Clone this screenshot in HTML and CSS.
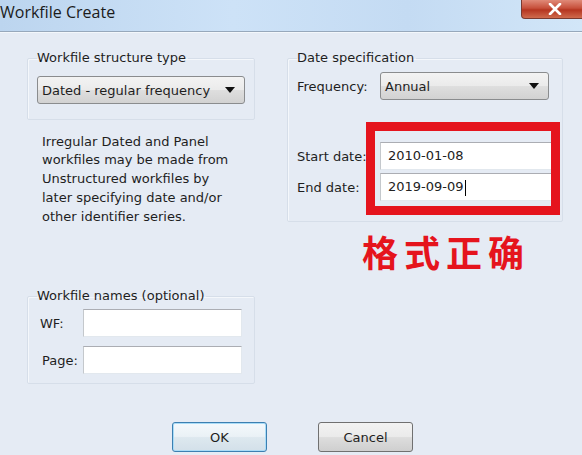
FILE: index.html
```html
<!doctype html>
<html>

	<head>
		<title>Workfile Create</title>
		<meta charset="utf-8" />
		<link rel="stylesheet" href="styles.css">
	</head>

	<body>

		<div class="titlebar">
			<span class="title">Workfile Create</span>
			<div class="close">
				<svg width="16" height="12" viewBox="0 0 16 12">
					<path d="M3 1 L13 11 M13 1 L3 11" stroke="#fff" stroke-width="2.6" stroke-linecap="round" />
				</svg>
			</div>
		</div>

		<div class="content">
			<div class="col left">
				<fieldset class="group g-structure">
					<legend>Workfile structure type</legend>
					<div class="combo">
						<span>Dated - regular frequency</span>
						<i class="arrow"></i>
					</div>
				</fieldset>

				<p class="note">
					Irregular Dated and Panel<br>
					workfiles may be made from<br>
					Unstructured workfiles by<br>
					later specifying date and/or<br>
					other identifier series.
				</p>

				<fieldset class="group g-names">
					<legend>Workfile names (optional)</legend>
					<div class="row">
						<label class="lbl-wf">WF:</label>
						<div class="field"></div>
					</div>
					<div class="row">
						<label class="lbl-page">Page:</label>
						<div class="field"></div>
					</div>
				</fieldset>
			</div>

			<div class="col right">
				<fieldset class="group g-date">
					<legend>Date specification</legend>
					<div class="row">
						<label>Frequency:</label>
						<div class="combo">
							<span>Annual</span>
							<i class="arrow"></i>
						</div>
					</div>
					<div class="dates">
						<div class="row">
							<label>Start date:</label>
							<div class="field">2010-01-08</div>
						</div>
						<div class="row">
							<label>End date:</label>
							<div class="field">2019-09-09<span class="caret"></span></div>
						</div>
						<!-- 红框标注 -->
						<div class="mark"></div>
					</div>
				</fieldset>

				<div class="note-cn">格式正确</div>
			</div>
		</div>

		<div class="buttons">
			<button class="btn default">OK</button>
			<button class="btn">Cancel</button>
		</div>

	</body>

</html>
```

FILE: styles.css
```css
body {
	margin: 0;
	width: 582px;
	height: 455px;
	overflow: hidden;
	background: #e5ebf4;
	font-family: "DejaVu Sans", sans-serif;
	font-size: 13px;
	color: #1e1e1e;
}

.titlebar {
	position: relative;
	height: 31px;
	border-bottom: 1px solid #97a8bb;
	background: linear-gradient(90deg, #bcd5ef 0%, #cde2f7 40%, #c4dbf3 70%, #d2e6f8 100%);
	box-shadow: 0 1px 0 #f3f7fb;
}

.title {
	display: block;
	font: 16px/24px "Open Sans", sans-serif;
	color: #1b1b1b;
}

.close {
	position: absolute;
	right: -6px;
	top: 0;
	width: 65px;
	height: 18px;
	border: 1px solid #7a3a30;
	border-top: none;
	border-radius: 0 0 4px 4px;
	background: linear-gradient(#e08a78, #c7503b 45%, #b53520 55%, #cf6a4d);
	display: flex;
	align-items: center;
	justify-content: center;
}

.content {
	display: grid;
	grid-template-columns: 228px 276px;
	column-gap: 32px;
	padding-left: 27px;
}

.group {
	margin: 0;
	padding: 0 13px 0 9px;
	border: 1px solid #d6dee9;
	border-radius: 2px;
	box-shadow: inset 1px 1px 0 #f4f7fb;
}

.group legend {
	padding: 0 2px 0 0;
	line-height: 16px;
}

.g-structure {
	margin-top: 18px;
	padding-top: 10px;
	padding-right: 9px;
	padding-bottom: 15px;
}

.g-names {
	margin-top: 62px;
	padding-top: 5px;
	padding-right: 12px;
	padding-bottom: 9px;
}

.g-date {
	margin-top: 18px;
	padding-top: 6px;
	padding-bottom: 20px;
}

.row {
	display: flex;
	align-items: center;
}

.g-names .row + .row {
	margin-top: 9px;
}

.g-names label {
	width: 46px;
	flex: none;
	box-sizing: border-box;
}

.lbl-wf {
	padding-left: 3px;
}

.lbl-page {
	padding-left: 5px;
}

.g-date label {
	width: 83px;
	flex: none;
	white-space: nowrap;
}

.combo {
	flex: 1;
	height: 28px;
	box-sizing: border-box;
	border: 1px solid #8a8c8e;
	border-radius: 3px;
	background: linear-gradient(#f3f3f3, #ebebeb 48%, #dedede 52%, #d2d2d2);
	display: flex;
	align-items: center;
	padding: 0 9px 0 4px;
}

.combo span {
	flex: 1;
}

.arrow {
	width: 0;
	height: 0;
	border-left: 5px solid transparent;
	border-right: 5px solid transparent;
	border-top: 6px solid #111;
}

.field {
	flex: 1;
	height: 28px;
	box-sizing: border-box;
	background: #fff;
	border: 1px solid #e2e8ee;
	border-top-color: #abadb3;
	border-left-color: #c4c8cc;
	padding-left: 7px;
	line-height: 26px;
	color: #222;
	position: relative;
	z-index: 1;
}

.note {
	margin: 12.65px 0 0 15px;
	line-height: 18.75px;
}

.dates {
	position: relative;
	margin-top: 42px;
}

.dates .row + .row {
	margin-top: 3px;
}

.dates .field {
	margin-right: -3px;
}

.caret {
	display: inline-block;
	width: 1px;
	height: 16px;
	margin-left: 1px;
	background: #000;
	vertical-align: middle;
}

.mark {
	position: absolute;
	left: 69px;
	top: -20px;
	width: 194px;
	height: 93px;
	box-sizing: border-box;
	border: 9px solid #e5141d;
	z-index: 2;
}

.note-cn {
	margin: 9px 0 0 75px;
	font: bold 36px/40px "Noto Sans CJK SC", sans-serif;
	letter-spacing: 6px;
	color: #e5141d;
}

.buttons {
	display: flex;
	justify-content: center;
	gap: 51px;
	margin-top: 38px;
	padding-left: 3px;
}

.btn {
	width: 95px;
	height: 30px;
	border: 1px solid #707070;
	border-radius: 3px;
	background: linear-gradient(#f2f2f2, #ebebeb 48%, #dddddd 52%, #cfcfcf);
	font-family: "DejaVu Sans", sans-serif;
	font-size: 13px;
	color: #1e1e1e;
}

.btn.default {
	border-color: #3c7fb1;
	box-shadow: inset 0 0 0 1px #a9dcf7;
	background: linear-gradient(#f4f9fc, #eaf1f6 48%, #dde8ef 52%, #d3e0e9);
}
```
